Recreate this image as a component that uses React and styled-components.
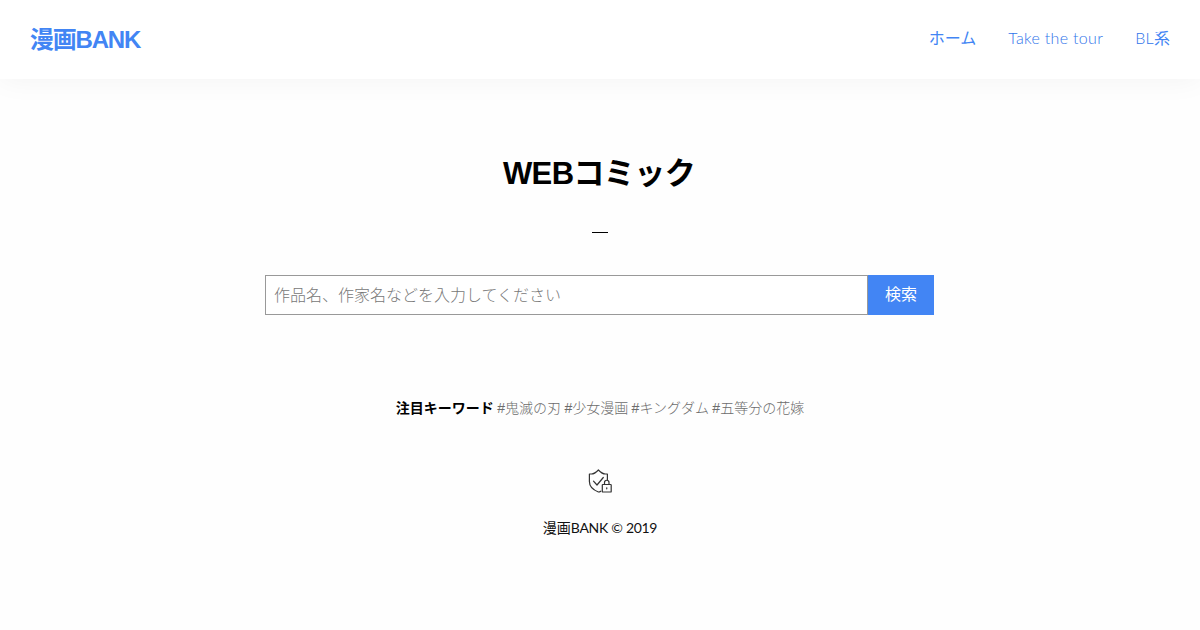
import React, { useState } from "react";
import styled, { createGlobalStyle } from "styled-components";

const links = [
    { latin: '', label: 'ホーム', href: '#home' },
    { latin: 'Take the tour', label: '', href: '#tour' },
    { latin: 'BL', label: '系', href: '#bl' }
];

const keywords = ['#鬼滅の刃', '#少女漫画', '#キングダム', '#五等分の花嫁'];

const ShieldLock = () => (
    <Icon viewBox="0 0 24 24">
        <path d="M12.8 22.2 C12 22.8 11.2 23 10.4 23 C4 20.5 1.4 17 1.4 12.5 V5 H3.5 C6.5 5 8.3 3.2 10.4 1 C12.5 3.2 14.3 5 17.3 5 H19.4 V10.5" />
        <path d="M5.5 12.2 L9 16 L15.3 8.5" />
        <rect x="14.3" y="15.5" width="8.9" height="7.5" rx="0.6" />
        <path d="M16.5 15.5 V13.5 A2.25 2.25 0 0 1 21 13.5 V15.5" />
        <path d="M18.75 18.8 V19.8" />
    </Icon>
);

const App = () => {
    const [query, setQuery] = useState('');

    return (
        <>
            <GlobalStyle />
            <Header>
                <Logo href="#home">漫画BANK</Logo>
                <Nav>
                    {links.map((link) => (
                        <NavLink key={link.href} href={link.href}>
                            {link.latin && <Latin>{link.latin}</Latin>}{link.label}
                        </NavLink>
                    ))}
                </Nav>
            </Header>
            <Main>
                <Title>WEBコミック</Title>
                <Divider />
                <SearchForm onSubmit={(event) => event.preventDefault()}>
                    <SearchInput
                        value={query}
                        onChange={(event) => setQuery(event.target.value)}
                        placeholder="作品名、作家名などを入力してください"
                    />
                    <SearchButton type="submit">検索</SearchButton>
                </SearchForm>
                <Keywords>
                    <strong>注目キーワード</strong>
                    {keywords.map((keyword) => (
                        <React.Fragment key={keyword}> <a href={keyword}>{keyword}</a></React.Fragment>
                    ))}
                </Keywords>
                <ShieldLock />
                <Copyright>漫画<span>BANK © 2019</span></Copyright>
            </Main>
        </>
    );
};

const GlobalStyle = createGlobalStyle`
    * {
        box-sizing: border-box;
    }
    body {
        margin: 0;
        background: #fefefe;
        color: #000;
        font-family: "Liberation Sans", "Noto Sans CJK JP", sans-serif;
    }
    a {
        text-decoration: none;
    }
`;

const Header = styled.header`
    display: flex;
    justify-content: space-between;
    align-items: center;
    height: 79px;
    padding: 0 30px 4px;
    background: #fff;
    box-shadow: 0 0 30px rgba(0, 0, 0, 0.05);
`;

const Logo = styled.a`
    color: #4285f4;
    font-size: 24px;
    font-weight: bold;
    letter-spacing: -1.2px;
`;

const Nav = styled.nav`
    display: flex;
    gap: 32px;
`;

const NavLink = styled.a`
    color: #4285f4;
    font-family: Lato, "Noto Sans CJK JP", sans-serif;
    font-size: 16px;
    line-height: 24px;
`;

const Latin = styled.span`
    color: #2f74ea;
    font-weight: 300;
    letter-spacing: 0.32px;
`;

const Main = styled.main`
    display: flex;
    flex-direction: column;
    align-items: center;
`;

const Title = styled.h1`
    margin: 71px 2px 0 0;
    font-size: 31px;
    line-height: 48px;
    letter-spacing: -0.6px;
`;

const Divider = styled.div`
    width: 16px;
    height: 1px;
    margin: 34px 0 42px;
    background: #000;
`;

const SearchForm = styled.form`
    display: flex;
    width: 669px;
    height: 40px;
    margin-right: 1px;
`;

const SearchInput = styled.input`
    flex: 1;
    padding: 2px 8px 0;
    border: 1px solid #999;
    border-radius: 0;
    outline: none;
    background: #fff;
    font: 16px "Liberation Sans", "Noto Sans CJK JP", sans-serif;

    &::placeholder {
        color: #777;
        font-weight: 300;
    }
`;

const SearchButton = styled.button`
    width: 66px;
    padding: 0 0 4px;
    border: none;
    background: #4285f4;
    color: #fff;
    font: 16px "Liberation Sans", "Noto Sans CJK JP", sans-serif;
`;

const Keywords = styled.p`
    margin: 82px 0 0;
    font-size: 14px;
    line-height: 22px;
    word-spacing: -0.5px;

    a {
        color: #6c6c6c;
        font-weight: 300;
    }
`;

const Icon = styled.svg`
    width: 24px;
    height: 24px;
    margin-top: 50px;
    fill: none;
    stroke: #333;
    stroke-width: 1.2;
    stroke-linecap: round;
    stroke-linejoin: round;
`;

const Copyright = styled.p`
    margin: 24px 0 0;
    color: #111;
    font-family: Lato, "Noto Sans CJK JP", sans-serif;
    font-size: 14px;
    line-height: 22px;

    span {
        letter-spacing: -0.3px;
    }
`;

export default App;
